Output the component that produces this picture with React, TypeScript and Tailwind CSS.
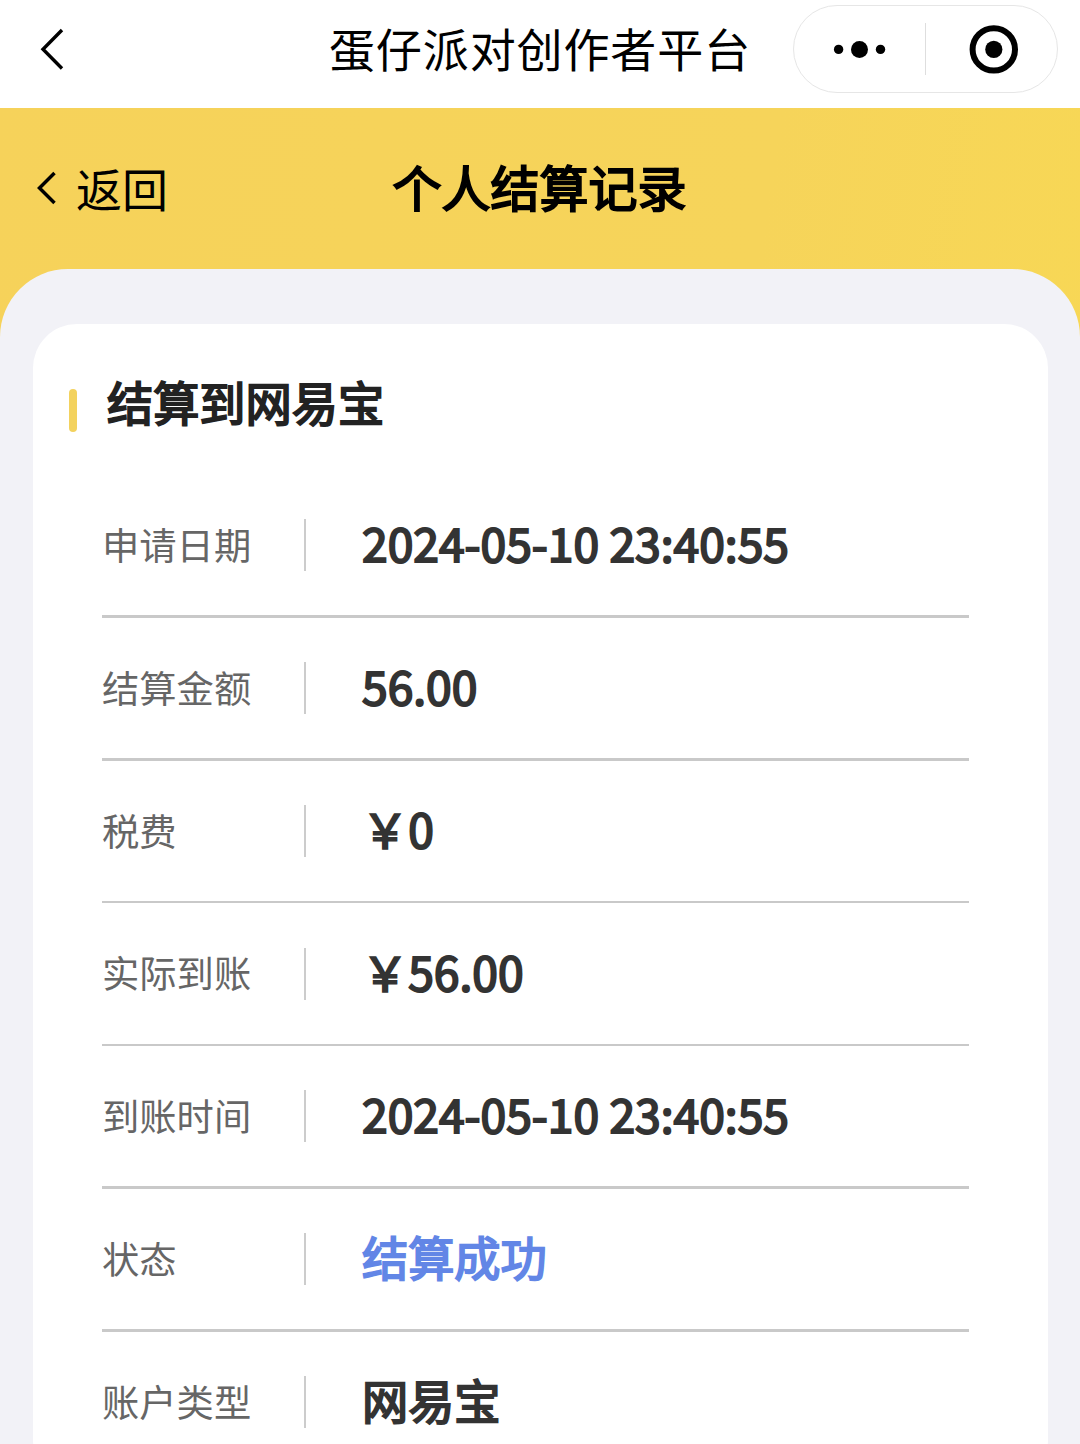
const rows = [
  { label: '申请日期', value: '2024-05-10 23:40:55', size: 'h-[143px] border-b-[3px]' },
  { label: '结算金额', value: '56.00', size: 'h-[143px] border-b-[3px]' },
  { label: '税费', value: '￥0', size: 'h-[142px] border-b-2' },
  { label: '实际到账', value: '￥56.00', size: 'h-[143px] border-b-2' },
  { label: '到账时间', value: '2024-05-10 23:40:55', size: 'h-[143px] border-b-[3px]' },
  { label: '状态', value: '结算成功', size: 'h-[143px] border-b-[3px]', success: true },
  { label: '账户类型', value: '网易宝', size: 'h-[143px] border-b-[3px]' },
];

function TopBar() {
  return (
    <header className="grid h-[108px] shrink-0 grid-cols-[1fr_auto_1fr] items-center bg-white text-black">
      <svg className="ml-[38px] mt-[-10px] h-[44px] w-[28px]" viewBox="0 0 28 44" fill="none" stroke="currentColor" strokeWidth="3.4">
        <path d="M24 3 5 22.3l19 19.2" />
      </svg>
      <h1 className="mt-[-15px] text-[46px] leading-none tracking-[0.9px]">蛋仔派对创作者平台</h1>
      <div className="mr-[22px] mt-[-10px] flex h-[88px] w-[265px] items-center justify-self-end rounded-full border border-[#e6e6e6]">
        <svg className="h-[20px] w-[131px]" viewBox="0 0 131 20" fill="currentColor">
          <circle cx="44.6" cy="10.4" r="4.7" />
          <circle cx="65.5" cy="10.4" r="8.5" />
          <circle cx="86.5" cy="10.4" r="4.7" />
        </svg>
        <span className="h-[52px] w-px bg-[#dedede]" />
        <svg className="ml-[43px] h-[50px] w-[50px]" viewBox="0 0 50 50">
          <circle cx="24.8" cy="25.4" r="21.2" fill="none" stroke="currentColor" strokeWidth="6" />
          <circle cx="24.8" cy="25.4" r="8.6" fill="currentColor" />
        </svg>
      </div>
    </header>
  );
}

export default function App() {
  return (
    <div className="flex h-[1444px] w-[1080px] flex-col overflow-hidden bg-[linear-gradient(100deg,#f6d25a_0%,#f6d45a_60%,#f8d953_100%)] font-['Noto_Sans_CJK_SC',sans-serif]">
      <TopBar />
      <div className="grid h-[161px] shrink-0 grid-cols-[1fr_auto_1fr] items-center text-black">
        <div className="ml-[35px] flex items-center">
          <svg className="mt-[-2px] h-[34px] w-[22px]" viewBox="0 0 22 34" fill="none" stroke="currentColor" strokeWidth="3.5">
            <path d="M19.5 2 4.5 17l15 15" />
          </svg>
          <span className="ml-[19px] mt-[-4px] text-[46px] leading-none">返回</span>
        </div>
        <h2 className="mr-[1px] mt-[-6px] text-[49px] leading-none [-webkit-text-stroke:2px_currentColor]">个人结算记录</h2>
      </div>
      <main className="flex-1 rounded-t-[68px] bg-[#f2f2f7] px-[33px] pt-[55px]">
        <section className="h-[1160px] w-[1015px] rounded-[44px] bg-white">
          <div className="flex h-[151px] items-center pl-[36px]">
            <span className="mt-[22px] h-[43px] w-[8px] rounded-full bg-[#f3d25e]" />
            <h3 className="ml-[30px] mt-[3px] text-[46.2px] leading-none text-[#222222] [-webkit-text-stroke:2px_currentColor]">结算到网易宝</h3>
          </div>
          <div className="ml-[69px] w-[867px]">
            {rows.map((row) => (
              <div key={row.label} className={`flex items-center border-[#c9c9c9] ${row.size}`}>
                <span className="mt-[-1px] w-[202px] text-[37.3px] leading-none text-[#666666]">{row.label}</span>
                <span className="h-[52px] w-[2px] bg-[#cccccc]" />
                <span
                  className={`ml-[56px] mt-[-5px] whitespace-nowrap text-[46.2px] leading-none [-webkit-text-stroke:2px_currentColor] ${row.success ? 'text-[#6286e6]' : 'text-[#333333]'}`}
                >
                  {row.value}
                </span>
              </div>
            ))}
          </div>
        </section>
      </main>
    </div>
  );
}
